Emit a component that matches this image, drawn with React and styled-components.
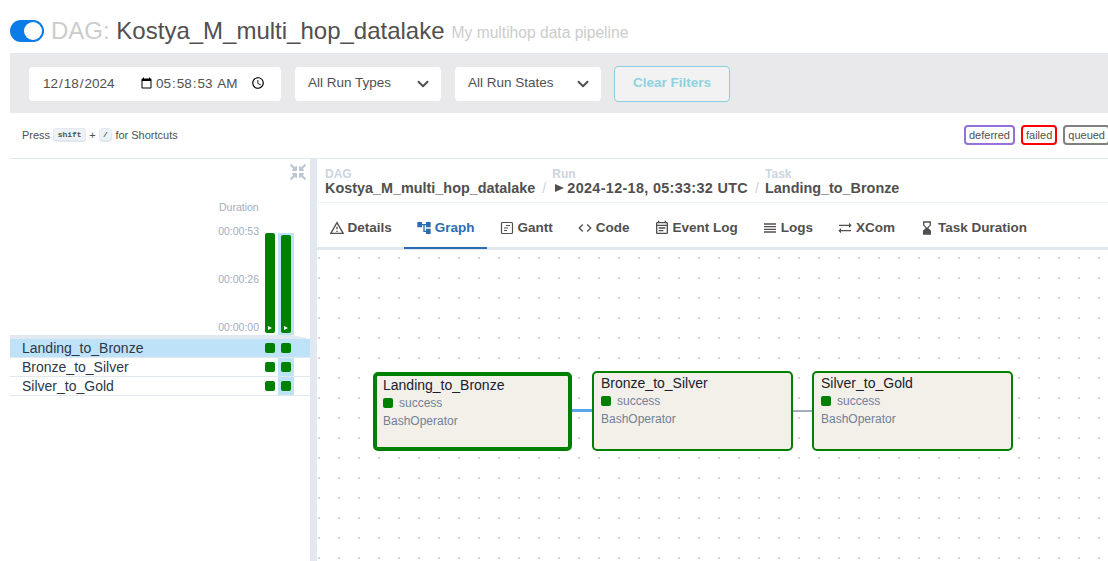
import React from "react";
import styled, { createGlobalStyle } from "styled-components";
import { FiChevronDown } from "react-icons/fi";
import { FaCompressArrowsAlt } from "react-icons/fa";
import {
  MdAccountTree,
  MdCode,
  MdHourglassBottom,
  MdOutlineEventNote,
  MdOutlineWarningAmber,
  MdReorder,
  MdSyncAlt,
} from "react-icons/md";

const GlobalStyle = createGlobalStyle`
  html, body {
    margin: 0;
    height: 100%;
    overflow: hidden;
    background: white;
    color: #51504f;
    font-family: "Liberation Sans", Arial, sans-serif;
  }
`;

const Page = styled.div`
  width: 1108px;
  height: 561px;
  padding-left: 10px;
  box-sizing: border-box;
  display: flex;
  flex-direction: column;
  overflow: hidden;
`;

const Header = styled.header`
  height: 53px;
  display: flex;
  align-items: center;
  padding-top: 8px;
  box-sizing: border-box;
`;

const Toggle = styled.div`
  width: 34px;
  height: 22px;
  border-radius: 11px;
  background: #0b7ce8;
  display: flex;
  align-items: center;
  justify-content: flex-end;
  padding-right: 2px;
  box-sizing: border-box;
  margin-right: 7px;

  &::after {
    content: "";
    width: 18px;
    height: 18px;
    border-radius: 50%;
    background: white;
  }
`;

const Title = styled.h1`
  margin: 0;
  font-size: 24px;
  font-weight: 400;
  color: #51504f;
`;

const Muted = styled.span`
  color: #ccc;
`;

const Description = styled.span`
  margin-left: 7px;
  padding-top: 4px;
  font-size: 15.6px;
  color: #ccc;
`;

const FilterBar = styled.div`
  height: 60px;
  flex: none;
  background: #e9e9eb;
  border-top: 1px solid #e2e8f0;
  box-sizing: border-box;
  display: flex;
  align-items: center;
  padding-left: 19px;
  gap: 14px;
`;

const DateBox = styled.div`
  width: 252px;
  height: 34px;
  background: white;
  border-radius: 4px;
  display: flex;
  align-items: center;
  padding-left: 13px;
  box-sizing: border-box;
`;

const DateField = styled.input`
  border: none;
  outline: none;
  background: transparent;
  padding: 0;
  font: 13.5px "Liberation Sans", Arial, sans-serif;
  color: #51504f;
  width: ${(p) => p.$width}px;
`;

const SelectBox = styled.div`
  width: 146px;
  height: 34px;
  background: white;
  border-radius: 4px;
  display: flex;
  align-items: center;
  justify-content: space-between;
  padding: 0 9px 2px 13px;
  box-sizing: border-box;
  font-size: 13.5px;
  color: #51504f;

  svg {
    font-size: 18px;
    stroke-width: 2.6;
    margin-top: 2px;
  }
`;

const ClearButton = styled.button`
  width: 116px;
  height: 36px;
  margin-left: -1px;
  background: #f2f2f3;
  border: 1px solid #8acfdd;
  border-radius: 4px;
  color: #8ed2df;
  font: bold 13.5px "Liberation Sans", Arial, sans-serif;
  padding: 0 0 2px;
`;

const InfoRow = styled.div`
  height: 45px;
  flex: none;
  display: flex;
  align-items: center;
  justify-content: space-between;
  padding-left: 12px;
  box-sizing: border-box;
  font-size: 11px;
`;

const Shortcuts = styled.div`
  display: flex;
  align-items: center;
  gap: 3px;
  margin-top: -1px;
`;

const Kbd = styled.kbd`
  background: #edf2f7;
  border: 1px solid #e2e8f0;
  border-bottom-width: 2px;
  border-radius: 4px;
  padding: 0 3.5px;
  font: bold 8px "Liberation Mono", monospace;
  line-height: 11px;
`;

const Legend = styled.div`
  display: flex;
  gap: 6px;
  margin-top: -1px;
  margin-right: -2px;
`;

const LegendItem = styled.span`
  height: 20px;
  border: 2px solid ${(p) => p.$color};
  border-radius: 4px;
  padding: 0 3px;
  box-sizing: border-box;
  line-height: 16px;
  font-size: 11px;
`;

const Main = styled.div`
  flex: 1;
  display: flex;
  min-height: 0;
  border-top: 1px solid #e2e8f0;
`;

const GridPanel = styled.aside`
  width: 300px;
  flex: none;
  display: flex;
  flex-direction: column;
`;

const ChartHead = styled.div`
  height: 176px;
  flex: none;
  display: flex;
  justify-content: flex-end;
  padding-right: 16px;
  position: relative;
`;

const CollapseButton = styled.div`
  position: absolute;
  top: 5px;
  right: 4px;
  color: #bcc6d3;
  font-size: 16px;
  line-height: 0;
`;

const AxisColumn = styled.div`
  width: 43px;
  margin: 42px 0 2px;
  display: flex;
  flex-direction: column;
  align-items: flex-end;
  padding-right: 3px;
  box-sizing: border-box;
  color: #a0aec0;
  font-size: 10.5px;
`;

const AxisTitle = styled.div`
  width: 100%;
  padding-bottom: 12px;
  text-align: left;
  font-size: 10.5px;
`;

const AxisLabels = styled.div`
  flex: 1;
  display: flex;
  flex-direction: column;
  justify-content: space-between;
`;

const AxisLabel = styled.span`
  position: relative;

  &::after {
    content: "";
    position: absolute;
    z-index: -1;
    left: 100%;
    top: 9px;
    width: 35px;
    height: 1px;
    background: #edf2f7;
  }
`;

const BarColumn = styled.div`
  width: 16px;
  height: 102px;
  align-self: flex-end;
  display: flex;
  justify-content: center;
  align-items: flex-end;
  padding-bottom: 2px;
  box-sizing: border-box;
  background: ${(p) => (p.$active ? "#bee3f8" : "transparent")};
`;

const Bar = styled.div`
  width: 10px;
  height: ${(p) => p.$height}px;
  background: green;
  border-radius: 2px;
  display: flex;
  align-items: flex-end;
  justify-content: center;
  padding-bottom: 3px;
  box-sizing: border-box;

  &::after {
    content: "";
    border-left: 4px solid white;
    border-top: 2.5px solid transparent;
    border-bottom: 2.5px solid transparent;
  }
`;

const HeadRule = styled.div`
  height: 4px;
  flex: none;
  background: #e2e8f0;
  clip-path: polygon(0 0, 94% 0, 100% 100%, 0 100%);
`;

const TaskRow = styled.div`
  height: 19px;
  flex: none;
  display: flex;
  align-items: center;
  box-sizing: border-box;
  padding-left: 12px;
  padding-right: 16px;
  font-size: 14px;
  color: #2d3748;
  background: ${(p) => (p.$active ? "#bee3f8" : "white")};
  border-bottom: 1px solid #e2e8f0;
`;

const TaskName = styled.span`
  flex: 1;
`;

const RunCell = styled.div`
  width: 16px;
  height: 100%;
  display: flex;
  align-items: center;
  justify-content: center;
  background: ${(p) => (p.$active ? "#bee3f8" : "transparent")};
`;

const StatusSquare = styled.span`
  width: 10px;
  height: 10px;
  border-radius: 2px;
  background: green;
  display: block;
`;

const Divider = styled.div`
  width: 7px;
  flex: none;
  background: #e2e8f0;
`;

const DetailPanel = styled.section`
  flex: 1;
  min-width: 0;
  display: flex;
  flex-direction: column;
`;

const Breadcrumbs = styled.div`
  height: 44px;
  flex: none;
  box-sizing: border-box;
  padding: 7px 0 6px 8px;
  display: flex;
  align-items: flex-end;
  border-bottom: 1px solid #edf2f7;
  white-space: nowrap;
`;

const Crumb = styled.div`
  display: flex;
  flex-direction: column;
`;

const CrumbLabel = styled.span`
  font-size: 12px;
  font-weight: 700;
  line-height: 12px;
  color: #cbd5e0;
`;

const CrumbValue = styled.span`
  font-size: 14.4px;
  font-weight: 700;
  line-height: 16px;
  display: flex;
  align-items: center;
  letter-spacing: ${(p) => p.$spacing || 0}px;
`;

const PlayMark = styled.i`
  width: 0;
  height: 0;
  margin: 0 3px 0 3px;
  border-left: 9px solid #51504f;
  border-top: 4.5px solid transparent;
  border-bottom: 4.5px solid transparent;
`;

const CrumbSep = styled.span`
  color: #cbd5e0;
  font-size: 14px;
  line-height: 16px;
  margin: 0 6px 0 7px;
  width: 4px;
`;

const Tabs = styled.nav`
  height: 47px;
  flex: none;
  box-sizing: border-box;
  display: flex;
  border-bottom: 3px solid #e2e8f0;
`;

const Tab = styled.div`
  height: 46px;
  box-sizing: border-box;
  padding: 5px 12.5px 0;
  display: flex;
  align-items: center;
  gap: 4px;
  font-size: 13.5px;
  font-weight: 700;
  color: ${(p) => (p.$active ? "#2b6cb0" : "#51504f")};
  border-bottom: 2px solid ${(p) => (p.$active ? "#2b6cb0" : "transparent")};

  svg {
    flex: none;
    width: 16px;
    height: 16px;
    margin: 0 -1px;
  }
`;

const Canvas = styled.div`
  flex: 1;
  position: relative;
  overflow: hidden;
  background-image: radial-gradient(circle, #9a9aa2 0.6px, transparent 0.8px);
  background-size: 20px 20px;
  background-position: -8px -2px;
`;

const Node = styled.div`
  position: absolute;
  left: ${(p) => p.$x}px;
  top: ${(p) => p.$y}px;
  width: ${(p) => p.$w}px;
  height: ${(p) => p.$h}px;
  box-sizing: border-box;
  background: #f3f0ea;
  border: ${(p) => p.$border}px solid green;
  border-radius: 5px;
  padding: ${(p) => p.$padTop}px 6px 0 ${(p) => p.$padLeft}px;
`;

const NodeTitle = styled.div`
  font-size: 14px;
  line-height: 16px;
  color: #1a202c;
`;

const NodeStatus = styled.div`
  display: flex;
  align-items: center;
  gap: 6px;
  margin-top: 3px;
  font-size: 12px;
  line-height: 14px;
  color: #718096;
`;

const NodeOperator = styled.div`
  margin-top: 4px;
  font-size: 12px;
  line-height: 14px;
  color: #718096;
`;

const Edge = styled.div`
  position: absolute;
  left: ${(p) => p.$x}px;
  top: ${(p) => p.$y}px;
  width: ${(p) => p.$w}px;
  height: ${(p) => p.$h}px;
  background: ${(p) => p.$color};
`;

const GanttIcon = () => (
  <svg viewBox="0 0 16 16" fill="none" stroke="currentColor">
    <rect x="2.5" y="2.5" width="11" height="11" rx="1" strokeWidth="1.2" />
    <path d="M7 5.5h4M5 8h4M5 10.5h3" strokeWidth="1.2" />
  </svg>
);

const tasks = ["Landing_to_Bronze", "Bronze_to_Silver", "Silver_to_Gold"];

const tabs = [
  { label: "Details", icon: <MdOutlineWarningAmber /> },
  { label: "Graph", icon: <MdAccountTree />, active: true },
  { label: "Gantt", icon: <GanttIcon /> },
  { label: "Code", icon: <MdCode /> },
  { label: "Event Log", icon: <MdOutlineEventNote /> },
  { label: "Logs", icon: <MdReorder /> },
  { label: "XCom", icon: <MdSyncAlt /> },
  { label: "Task Duration", icon: <MdHourglassBottom /> },
];

const nodes = [
  { name: "Landing_to_Bronze", x: 56, y: 122, w: 199, h: 79, border: 4, padTop: 1, padLeft: 6 },
  { name: "Bronze_to_Silver", x: 275, y: 121, w: 201, h: 80, border: 2, padTop: 2, padLeft: 7 },
  { name: "Silver_to_Gold", x: 495, y: 121, w: 201, h: 80, border: 2, padTop: 2, padLeft: 7 },
];

export default function App() {
  return (
    <Page>
      <GlobalStyle />
      <Header>
        <Toggle />
        <Title>
          <Muted>DAG:</Muted> Kostya_M_multi_hop_datalake
        </Title>
        <Description>My multihop data pipeline</Description>
      </Header>

      <FilterBar>
        <DateBox>
          <DateField type="date" defaultValue="2024-12-18" $width={113} />
          <DateField type="time" step="1" defaultValue="05:58:53" $width={113} />
        </DateBox>
        <SelectBox>
          All Run Types <FiChevronDown />
        </SelectBox>
        <SelectBox>
          All Run States <FiChevronDown />
        </SelectBox>
        <ClearButton>Clear Filters</ClearButton>
      </FilterBar>

      <InfoRow>
        <Shortcuts>
          Press <Kbd>shift</Kbd> + <Kbd>/</Kbd> for Shortcuts
        </Shortcuts>
        <Legend>
          <LegendItem $color="#9370db">deferred</LegendItem>
          <LegendItem $color="red">failed</LegendItem>
          <LegendItem $color="gray">queued</LegendItem>
        </Legend>
      </InfoRow>

      <Main>
        <GridPanel>
          <ChartHead>
            <CollapseButton>
              <FaCompressArrowsAlt />
            </CollapseButton>
            <AxisColumn>
              <AxisTitle>Duration</AxisTitle>
              <AxisLabels>
                <AxisLabel>00:00:53</AxisLabel>
                <AxisLabel>00:00:26</AxisLabel>
                <AxisLabel>00:00:00</AxisLabel>
              </AxisLabels>
            </AxisColumn>
            <BarColumn>
              <Bar $height={100} />
            </BarColumn>
            <BarColumn $active>
              <Bar $height={98} />
            </BarColumn>
          </ChartHead>
          <HeadRule />
          {tasks.map((task, i) => (
            <TaskRow key={task} $active={i === 0}>
              <TaskName>{task}</TaskName>
              <RunCell>
                <StatusSquare />
              </RunCell>
              <RunCell $active>
                <StatusSquare />
              </RunCell>
            </TaskRow>
          ))}
        </GridPanel>
        <Divider />
        <DetailPanel>
          <Breadcrumbs>
            <Crumb>
              <CrumbLabel>DAG</CrumbLabel>
              <CrumbValue>Kostya_M_multi_hop_datalake</CrumbValue>
            </Crumb>
            <CrumbSep>/</CrumbSep>
            <Crumb>
              <CrumbLabel>Run</CrumbLabel>
              <CrumbValue $spacing={0.33}>
                <PlayMark />
                2024-12-18, 05:33:32 UTC
              </CrumbValue>
            </Crumb>
            <CrumbSep>/</CrumbSep>
            <Crumb>
              <CrumbLabel>Task</CrumbLabel>
              <CrumbValue>Landing_to_Bronze</CrumbValue>
            </Crumb>
          </Breadcrumbs>
          <Tabs>
            {tabs.map((tab) => (
              <Tab key={tab.label} $active={tab.active}>
                {tab.icon}
                {tab.label}
              </Tab>
            ))}
          </Tabs>
          <Canvas>
            <Edge $x={254} $y={159} $w={22} $h={3} $color="#5aa6ea" />
            <Edge $x={475} $y={160} $w={21} $h={2} $color="#a0aec0" />
            {nodes.map((node) => (
              <Node
                key={node.name}
                $x={node.x}
                $y={node.y}
                $w={node.w}
                $h={node.h}
                $border={node.border}
                $padTop={node.padTop}
                $padLeft={node.padLeft}
              >
                <NodeTitle>{node.name}</NodeTitle>
                <NodeStatus>
                  <StatusSquare />
                  success
                </NodeStatus>
                <NodeOperator>BashOperator</NodeOperator>
              </Node>
            ))}
          </Canvas>
        </DetailPanel>
      </Main>
    </Page>
  );
}
